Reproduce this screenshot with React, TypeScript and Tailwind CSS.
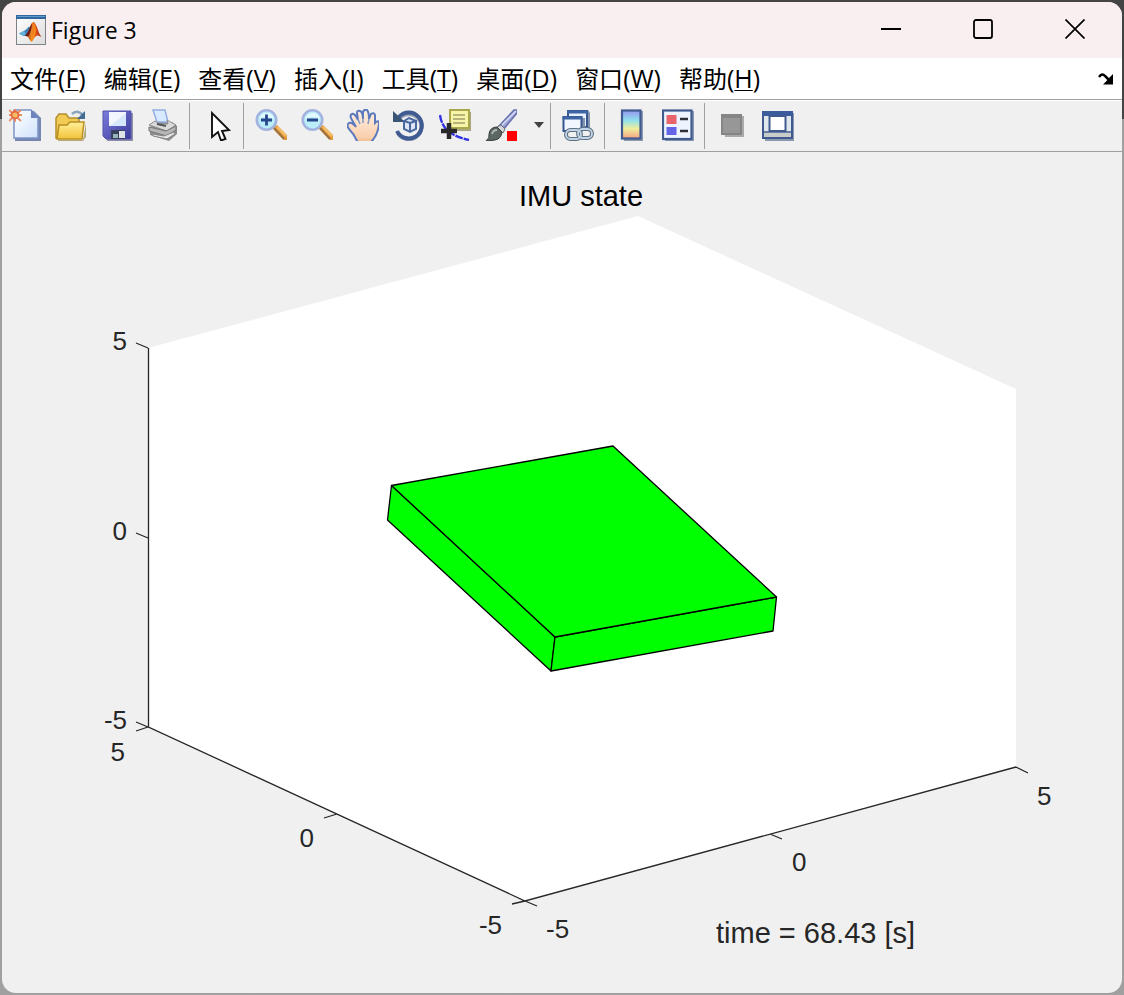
import React from "react";

const menus: [string, string][] = [
  ["文件", "F"],
  ["编辑", "E"],
  ["查看", "V"],
  ["插入", "I"],
  ["工具", "T"],
  ["桌面", "D"],
  ["窗口", "W"],
  ["帮助", "H"],
];

function Icon({ children }: { children: React.ReactNode }) {
  return (
    <svg viewBox="0 0 32 32" className="h-8 w-8" aria-hidden="true">
      {children}
    </svg>
  );
}

function Tool({ label, children }: { label: string; children: React.ReactNode }) {
  return (
    <button type="button" aria-label={label} className="flex h-full w-[46px] items-center justify-center pb-0.5">
      <Icon>{children}</Icon>
    </button>
  );
}

function Separator() {
  return <div className="mt-0.5 mr-1 mb-0.5 ml-[3px] w-px self-stretch bg-[#a0a0a0]" />;
}

function MatlabLogo() {
  return (
    <svg viewBox="0 0 30 30" className="h-[30px] w-[30px]" aria-hidden="true">
      <defs>
        <linearGradient id="logoBg" x1="0" y1="0" x2="1" y2="1">
          <stop offset="0" stopColor="#ffffff" />
          <stop offset="1" stopColor="#dcdcdc" />
        </linearGradient>
        <linearGradient id="logoFlame" x1="0" y1="0" x2="1" y2="0">
          <stop offset="0" stopColor="#7a1f12" />
          <stop offset="0.4" stopColor="#f08a24" />
          <stop offset="0.65" stopColor="#e4521b" />
          <stop offset="1" stopColor="#a3220f" />
        </linearGradient>
      </defs>
      <rect x="0.5" y="0.5" width="29" height="29" fill="url(#logoBg)" stroke="#7d8288" />
      <rect x="0" y="0" width="30" height="4" fill="#31679a" />
      <rect x="1" y="1" width="28" height="1" fill="#5f9bd0" />
      <path d="M3 18.5 L9.5 15 L13 11.5 L14.5 13 L10 21 L7.5 21 Z" fill="#3d86c0" />
      <path d="M3 18.5 L7.5 21 L10 19 L8 16Z" fill="#62b3da" />
      <path d="M9 21 Q12 18 14 12 Q16 6.500 18 7 Q20 9 22 15 Q23 19 25.500 22 Q22 19.500 20 21 Q18 23 16 26.500 Q14 26.500 12.500 22.500 Q11 20.500 9 21Z" fill="url(#logoFlame)" />
      <path d="M14.500 26 Q17.500 21 17.500 12 L18 8 Q20 12 20 16 Q19 22 16 26.500Z" fill="#f58b1d" />
      <path d="M9 21 Q12 18 14 12 L16 8 Q16 15 12.500 21Z" fill="#6d1d17" />
    </svg>
  );
}

function Magnifier({ plus }: { plus?: boolean }) {
  return (
    <>
      <path d="M19 18 L22 16 L32 26 V31 H29 L18 20Z" fill="#e39b3c" />
      <path d="M19 19 L29 30" stroke="#9c7240" strokeWidth="2" />
      <path d="M22 18 L31 27" stroke="#f6c06c" strokeWidth="2" />
      <circle cx="11.500" cy="11" r="9.700" fill="#b9edf7" stroke="#a3b3e0" strokeWidth="2.600" />
      <path d="M4 10 Q6 3 13 4 Q18 5 19 10 Q11 6 4 10Z" fill="#e2fbff" />
      <path d="M6 11 H17" stroke="#27478c" strokeWidth="2.800" />
      {plus && <path d="M11.500 5.500 V16.500" stroke="#27478c" strokeWidth="2.800" />}
    </>
  );
}

function Toolbar() {
  return (
    <div role="toolbar" aria-label="Figure" className="flex h-[52px] items-center overflow-hidden border-t border-b border-t-white border-b-[#a0a0a0] bg-[#f0f0f0]">
      <svg width="0" height="0" className="absolute" aria-hidden="true">
        <defs>
          <linearGradient id="page" x1="0" y1="0" x2="1" y2="1">
            <stop offset="0" stopColor="#ffffff" />
            <stop offset="1" stopColor="#cfe2fb" />
          </linearGradient>
          <linearGradient id="folder" x1="0" y1="0" x2="0" y2="1">
            <stop offset="0" stopColor="#fff09a" />
            <stop offset="1" stopColor="#f2c338" />
          </linearGradient>
          <linearGradient id="disk" x1="0" y1="0" x2="1" y2="1">
            <stop offset="0" stopColor="#7d7de0" />
            <stop offset="1" stopColor="#3a3a96" />
          </linearGradient>
          <linearGradient id="map" x1="0" y1="0" x2="0" y2="1">
            <stop offset="0" stopColor="#9694ee" />
            <stop offset="0.35" stopColor="#8fe0ee" />
            <stop offset="0.65" stopColor="#f0ee9c" />
            <stop offset="1" stopColor="#f5a183" />
          </linearGradient>
          <linearGradient id="skin" x1="0" y1="0" x2="0" y2="1">
            <stop offset="0" stopColor="#fff1e4" />
            <stop offset="1" stopColor="#f8cba6" />
          </linearGradient>
        </defs>
      </svg>
      <Tool label="New Figure">
        <path d="M6 2 H25 L32 9 V32 H6Z" fill="#7587ae" />
        <path d="M5 1 H22 L29 8 V29 H5Z" fill="url(#page)" stroke="#7c93c9" strokeWidth="1.500" />
        <path d="M22 1 V9 H30 Z" fill="#6c82bb" />
        <path d="M0 1 L12 12 M12 1 L0 12 M6 0 V13 M0 6 H13" stroke="#ee8b60" strokeWidth="1.800" />
        <circle cx="6" cy="6" r="3.500" fill="#f6bd62" stroke="#e4683e" strokeWidth="1.800" />
      </Tool>
      <Tool label="Open File">
        <path d="M3 31 H28 L31 14 V28 L28 32 H3Z" fill="#b4a878" />
        <path d="M1 28 V9 L4 5 H11 L14 9 H24 V14 L28 15 L26 29 H1Z" fill="#f1cb54" stroke="#b48f2b" strokeWidth="1.500" />
        <path d="M4 16 H12 L15 13 H29 L27 30 H2Z" fill="url(#folder)" stroke="#b98f22" strokeWidth="1.500" />
        <path d="M17 5 Q22 0 28 6" fill="none" stroke="#8aa5bd" strokeWidth="2.500" />
        <path d="M30 2 V10 H22Z" fill="#456c91" />
      </Tool>
      <Tool label="Save Figure">
        <path d="M4 4 H32 V32 H6Z" fill="#8e8ea6" />
        <path d="M2 2 H30 V30 H5 L2 27Z" fill="url(#disk)" stroke="#5353ae" />
        <path d="M8 3 H25 V17 H8Z" fill="#f2f7ff" />
        <path d="M9 17 L25 4 V17Z" fill="#d5e7fb" />
        <path d="M10 21 H24 V30 H10Z" fill="#39415f" />
        <path d="M18 22 H24 V29 H18Z" fill="#e0e3e5" />
        <path d="M12 25 H17 V29 H12Z" fill="#95b5b9" />
      </Tool>
      <Tool label="Print Figure">
        <path d="M3 18 L10 13 H25 L30 17 V25 L22 32 L3 26Z" fill="#8c8c8c" />
        <path d="M6 1 H18 L21 13 H10Z" fill="#d7eaff" stroke="#93aee3" strokeWidth="1.500" />
        <path d="M2 16 L8 12 L12 15 H21 L20 11 L29 16 L20 22Z" fill="#dadada" stroke="#8d8d8d" />
        <path d="M2 18 L19 22 L29 17 V21 L20 27 L2 22Z" fill="#b6b6b6" stroke="#777777" />
        <path d="M5 25 L17 27 L27 23 L28 25 L20 30 L6 27Z" fill="#e5e5e5" stroke="#858585" />
        <path d="M10 15 L19 17" stroke="#555555" strokeWidth="2" />
      </Tool>
      <Separator />
      <Tool label="Edit Plot">
        <path d="M11 4 V28 L17 23 L20 31.500 L24.500 30 L21 22 L28 21Z" fill="white" stroke="#111111" strokeWidth="1.900" />
      </Tool>
      <Separator />
      <Tool label="Zoom In"><Magnifier plus /></Tool>
      <Tool label="Zoom Out"><Magnifier /></Tool>
      <Tool label="Pan">
        <path d="M10 32 Q7 25 2 20 Q-1 16 2 14 Q5 13 9 18 L5 11 Q2 6 5 5 Q8 4 11 11 L10 4 Q10 1 13 2 Q16 3 16 10 V3 Q17 0 20 1 Q22 3 22 10 L24 5 Q27 3 28 6 V14 Q32 10 32 15 Q31 25 25 32Z" fill="url(#skin)" stroke="#5c79bd" strokeWidth="2" />
        <path d="M11 31 H24" stroke="#f6c49b" strokeWidth="3" />
        <path d="M11 10 L13 15 M16 9 V14 M22 10 L21 15" stroke="#8196c4" strokeWidth="1.500" />
      </Tool>
      <Tool label="Rotate 3D">
        <path d="M6 10 A12.500 12.500 0 1 1 5 24" fill="none" stroke="#9aa5b8" strokeWidth="4" />
        <path d="M6 8 A13 13 0 1 1 4 22" fill="none" stroke="#3f5b91" strokeWidth="4" />
        <path d="M0 2 V13 H12Z" fill="#395674" />
        <path d="M11 12 L16 9 L23 12 V20 L17 23 L11 20Z" fill="#dce6f7" stroke="#49689e" strokeWidth="2" />
        <path d="M11 12 L17 14 L23 12 M17 14 V23" fill="none" stroke="#49689e" strokeWidth="2" />
      </Tool>
      <Tool label="Data Cursor">
        <path d="M12 3 H32 V22 H12Z" fill="#aaa785" />
        <path d="M11 1 H30 V19 H11Z" fill="#f7f5a8" stroke="#aaa64b" strokeWidth="2" />
        <path d="M14 6 H26 M14 10 H26 M14 14 H26" stroke="#a39e6c" strokeWidth="1.600" />
        <path d="M1 6 Q2 14 7 20 Q15 28 30 31" fill="none" stroke="#3030e6" strokeWidth="2.300" strokeDasharray="8 1" />
        <path d="M10 14 V30 M2 22 H18" stroke="#292929" strokeWidth="4.500" />
      </Tool>
      <Tool label="Brush">
        <path d="M14 17 L29 1 H32 V4 L18 21Z" fill="#9aa2d6" stroke="#6570ac" strokeWidth="1.500" />
        <path d="M17 16 L31 2" stroke="#d9dcf5" strokeWidth="1.500" />
        <path d="M12 18 L16 16 L20 20 L18 24Z" fill="#d5d7d7" stroke="#697079" />
        <path d="M1 32 Q5 29 4 25 Q5 18 12 18 L17 23 Q16 30 10 31Z" fill="#5c6663" stroke="#343b39" />
        <path d="M7 25 Q8 21 12 21" fill="none" stroke="#aeb7b2" strokeWidth="2" />
        <rect x="22" y="22" width="10" height="10" fill="#ff0000" />
      </Tool>
      <button type="button" aria-label="Brush options" className="flex h-full w-[23px] items-center justify-end pb-0.5">
        <svg viewBox="0 0 10 6" className="mr-[3px] h-1.5 w-2.5" aria-hidden="true">
          <path d="M0 0 H10 L5 6Z" fill="#424242" />
        </svg>
      </button>
      <Separator />
      <Tool label="Link Plot">
        <path d="M7 1 H26 L28 4 V19 H7Z" fill="#8493ae" />
        <rect x="6" y="2" width="19" height="16" fill="#e9f1ff" stroke="#36568f" strokeWidth="2" />
        <path d="M5 3 H26" stroke="#3d64a3" strokeWidth="3" />
        <path d="M20 9 H23 V22 H20Z" fill="#8493ae" />
        <rect x="1.500" y="8" width="18" height="14" fill="#f1f6ff" stroke="#36568f" strokeWidth="2" />
        <path d="M0.500 9 H20.500" stroke="#3d64a3" strokeWidth="3" />
        <g fill="none" stroke="#5f7386" strokeWidth="4">
          <rect x="4" y="21" width="15" height="9" rx="4.500" />
          <rect x="16" y="20" width="14" height="9" rx="4.500" />
        </g>
        <g fill="none" stroke="#c3d5e6" strokeWidth="1.800">
          <rect x="4" y="21" width="15" height="9" rx="4.500" />
          <rect x="16" y="20" width="14" height="9" rx="4.500" />
        </g>
      </Tool>
      <Separator />
      <Tool label="Insert Colorbar">
        <path d="M7 2 H27 V32 H8Z" fill="#8a98b0" />
        <rect x="6" y="1.500" width="18.500" height="28" fill="url(#map)" stroke="#405a8f" strokeWidth="2.200" />
      </Tool>
      <Tool label="Insert Legend">
        <path d="M2 2 H32 V32 H3Z" fill="#8a98b0" />
        <rect x="1" y="1.500" width="28.500" height="28.500" fill="#eef4ff" stroke="#405a8f" strokeWidth="2.200" />
        <rect x="4.500" y="6" width="10" height="9" fill="#e9656b" />
        <rect x="4.500" y="18" width="10" height="8" fill="#6464e6" />
        <path d="M18 10 H26 M18 22 H26" stroke="#303038" strokeWidth="2.600" />
      </Tool>
      <Separator />
      <Tool label="Hide Plot Tools">
        <path d="M7 7 H28 V28 H9Z" fill="#aaaaaa" />
        <rect x="6" y="6" width="19" height="19" fill="#979797" stroke="#858585" strokeWidth="2" />
        <path d="M5 7 H26" stroke="#858585" strokeWidth="4" />
      </Tool>
      <Tool label="Show Plot Tools">
        <path d="M2 4 H32 V32 H3Z" fill="#8a98b0" />
        <rect x="1" y="3" width="29" height="26" fill="#dfe6ec" stroke="#405a8f" strokeWidth="2" />
        <path d="M0 4.500 H31" stroke="#3b5c9c" strokeWidth="5" />
        <path d="M2 26 H29" stroke="#c9cdc9" strokeWidth="4" />
        <path d="M2 23 H29" stroke="#405a8f" strokeWidth="1.500" />
        <rect x="7.500" y="7" width="16" height="15" fill="#ffffff" stroke="#405a8f" strokeWidth="2" />
      </Tool>
    </div>
  );
}

const tickLabels: { x: number; y: number; text: string; anchor: "start" | "middle" | "end" }[] = [
  { x: 127, y: 350, text: "5", anchor: "end" },
  { x: 127, y: 540, text: "0", anchor: "end" },
  { x: 127, y: 729, text: "-5", anchor: "end" },
  { x: 125, y: 761, text: "5", anchor: "end" },
  { x: 314, y: 847, text: "0", anchor: "end" },
  { x: 502, y: 934, text: "-5", anchor: "end" },
  { x: 546, y: 938, text: "-5", anchor: "start" },
  { x: 792, y: 871, text: "0", anchor: "start" },
  { x: 1037, y: 805, text: "5", anchor: "start" },
];

function Plot() {
  return (
    <svg viewBox="2 152 1120 841" className="block w-full flex-1 font-['Liberation_Sans',sans-serif]" role="img" aria-label="IMU state">
      <polygon points="148,348 638,216 1016,389 1016,767 525,901 148,727" fill="#ffffff" />
      <path
        d="M148.500 348 V727 L525 901 L1016 767 M136 343 L148 348 M136 533 L148 538 M136 722 L148 727 M136 731 L148 727 M324 818 L337 814 M512 904 L525 901 M525 901 L537 906 M770 834 L782 839 M1016 767 L1028 773"
        fill="none"
        stroke="#262626"
        strokeWidth="1.300"
      />
      <g fill="#00ff00" stroke="#000000" strokeWidth="1.300" strokeLinejoin="round">
        <polygon points="391.500,485.500 387.500,520 551,671 555,637" />
        <polygon points="555,637 776.500,597 773,631 551,671" />
        <polygon points="391.500,485.500 613,446 776.500,597 555,637" />
      </g>
      <g fill="#262626" fontSize="26">
        {tickLabels.map((t) => (
          <text key={`${t.x}-${t.y}`} x={t.x} y={t.y} textAnchor={t.anchor}>
            {t.text}
          </text>
        ))}
      </g>
      <text x="581" y="206" fontSize="29" textAnchor="middle" fill="#000000">IMU state</text>
      <text x="716" y="943" fontSize="29" fill="#262626">time = 68.43 [s]</text>
    </svg>
  );
}

export default function App() {
  return (
    <div className="flex min-h-screen bg-linear-to-b from-[#444444] from-12% to-[#a0a0a0] to-12% p-0.5 font-['Open_Sans','Noto_Sans_CJK_SC',sans-serif] text-black">
      <main className="flex min-w-0 flex-1 flex-col overflow-hidden rounded-[14px] bg-[#f0f0f0]">
        <header className="flex h-14 items-center bg-[#f9eff1] pr-px pl-3.5">
          <MatlabLogo />
          <h1 className="ml-[5px] flex-1 text-[23px] font-normal">Figure 3</h1>
          <button type="button" aria-label="Minimize" className="flex h-full w-[92px] items-center justify-center pb-0.5">
            <svg viewBox="0 0 20 20" className="h-5 w-5" aria-hidden="true"><path d="M0 10 H20" stroke="black" strokeWidth="2" /></svg>
          </button>
          <button type="button" aria-label="Maximize" className="flex h-full w-[92px] items-center justify-center pb-0.5">
            <svg viewBox="0 0 20 20" className="h-5 w-5" aria-hidden="true"><rect x="1" y="1" width="18" height="18" rx="2" fill="none" stroke="black" strokeWidth="1.800" /></svg>
          </button>
          <button type="button" aria-label="Close" className="flex h-full w-[92px] items-center justify-center pb-0.5">
            <svg viewBox="0 0 20 20" className="h-5 w-5" aria-hidden="true"><path d="M0.500 0.500 L19.500 19.500 M19.500 0.500 L0.500 19.500" stroke="black" strokeWidth="1.700" /></svg>
          </button>
        </header>
        <nav className="flex h-[42px] items-center border-b border-[#a0a0a0] bg-white pr-2 pl-2">
          <div className="flex flex-1 gap-[18px]">
            {menus.map(([name, key]) => (
              <button key={key} type="button" className="text-2xl whitespace-nowrap">
                {name}
                <span className="text-[25px]">
                  (<span className="underline decoration-1 underline-offset-2">{key}</span>)
                </span>
              </button>
            ))}
          </div>
          <button type="button" aria-label="Dock Figure">
            <svg viewBox="0 0 16 12" className="h-3 w-4" aria-hidden="true">
              <path d="M1 4 Q4 -0.500 7 3 L11 7" fill="none" stroke="black" strokeWidth="2.500" />
              <path d="M15 1 V11.500 H5 L8 8.500 L12 4Z" fill="black" />
            </svg>
          </button>
        </nav>
        <Toolbar />
        <Plot />
      </main>
    </div>
  );
}
